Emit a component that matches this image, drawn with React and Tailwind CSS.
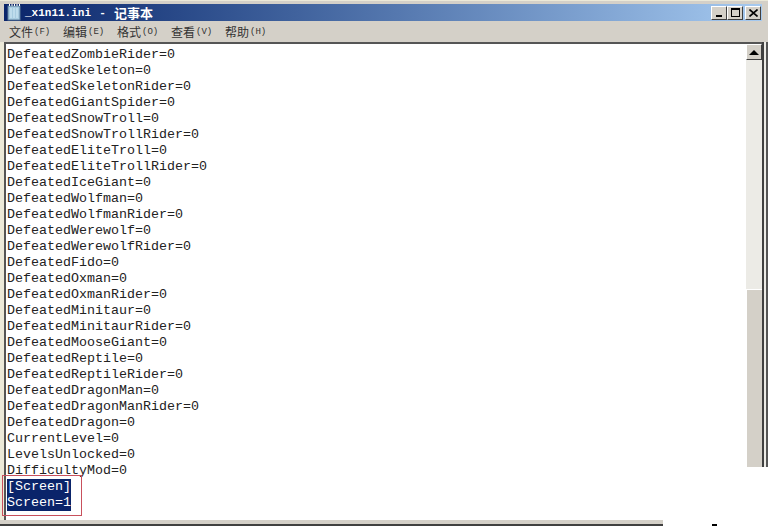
const lines = [
  'DefeatedZombieRider=0',
  'DefeatedSkeleton=0',
  'DefeatedSkeletonRider=0',
  'DefeatedGiantSpider=0',
  'DefeatedSnowTroll=0',
  'DefeatedSnowTrollRider=0',
  'DefeatedEliteTroll=0',
  'DefeatedEliteTrollRider=0',
  'DefeatedIceGiant=0',
  'DefeatedWolfman=0',
  'DefeatedWolfmanRider=0',
  'DefeatedWerewolf=0',
  'DefeatedWerewolfRider=0',
  'DefeatedFido=0',
  'DefeatedOxman=0',
  'DefeatedOxmanRider=0',
  'DefeatedMinitaur=0',
  'DefeatedMinitaurRider=0',
  'DefeatedMooseGiant=0',
  'DefeatedReptile=0',
  'DefeatedReptileRider=0',
  'DefeatedDragonMan=0',
  'DefeatedDragonManRider=0',
  'DefeatedDragon=0',
  'CurrentLevel=0',
  'LevelsUnlocked=0',
  'DifficultyMod=0',
]

const menus = [
  ['文件', '(F)'],
  ['编辑', '(E)'],
  ['格式', '(O)'],
  ['查看', '(V)'],
  ['帮助', '(H)'],
]

function WinButton({ children }) {
  return (
    <div className="w-[16px] h-[14px] bg-[#d4d0c8] border border-t-white border-l-white border-r-[#404040] border-b-[#404040] flex items-center justify-center">
      {children}
    </div>
  )
}

export default function App() {
  return (
    <div className="relative w-[768px] h-[526px] bg-white overflow-hidden font-['Liberation_Mono','Noto_Sans_CJK_SC',monospace]">
      <div className="bg-[#d4d0c8] pt-[3px] pl-[4px] pr-[6px] border-t border-[#ece9d8]">
        <div className="h-[17px] bg-gradient-to-r from-[#0a246a] to-[#a6caf0] flex items-center justify-between pl-[3px] pr-[1px]">
          <div className="flex items-center">
            <svg width="16" height="17" viewBox="0 0 16 17">
              <rect x="1" y="2" width="12" height="14" fill="#a8cce0" stroke="#5a7a98" />
              <path d="M2.5 2v-2M5 2v-2M7.5 2v-2M10 2v-2M12.5 2v-2" stroke="#fff" />
              <path d="M4 4v10M7 4v10M10 4v10" stroke="#d4ecf8" />
            </svg>
            <span className="ml-[2px] text-white text-[11px] font-bold leading-[16px] whitespace-pre">_x1n11.ini</span>
            <span className="w-[23px] text-center text-white text-[11px] font-bold leading-[16px]">-</span>
            <span className="text-white text-[13px] font-bold leading-[16px] font-['Noto_Sans_CJK_SC',sans-serif]">记事本</span>
          </div>
          <div className="flex items-center">
            <WinButton>
              <div className="w-[6px] h-[2px] bg-black mt-[6px]" />
            </WinButton>
            <WinButton>
              <div className="w-[9px] h-[9px] border border-black border-t-2" />
            </WinButton>
            <div className="ml-[2px]">
              <WinButton>
                <svg width="9" height="8" viewBox="0 0 9 8">
                  <path d="M0.5 0.5L8.5 7.5M8.5 0.5L0.5 7.5" stroke="#000" strokeWidth="1.6" />
                </svg>
              </WinButton>
            </div>
          </div>
        </div>
        <div className="h-[21px] flex items-center pl-[5px] text-[#333]">
          {menus.map(([label, key]) => (
            <span key={label} className="w-[54px] flex items-center whitespace-nowrap">
              <span className="text-[12px] font-['Noto_Sans_CJK_SC',sans-serif]">{label}</span>
              <span className="ml-[1px] mt-[2px] text-[9px] font-['Liberation_Mono',monospace]">{key}</span>
            </span>
          ))}
        </div>
      </div>

      <div className="flex h-[478px] bg-white">
        <div className="w-[4px] h-[478px] bg-[#ece9d8]" />
        <div className="flex-1 border-t-2 border-l-2 border-[#555] pt-[3px] pl-[1px] text-[13.33px] leading-[16px] text-[#222] font-['Liberation_Mono',monospace]">
          {lines.map((l) => (
            <div key={l}>{l}</div>
          ))}
          <div>
            <span className="inline-block bg-[#0a246a] text-white">[Screen]</span>
          </div>
          <div>
            <span className="inline-block bg-[#0a246a] text-white">Screen=1</span>
          </div>
        </div>
        <div className="w-[16px] h-[425px] flex flex-col bg-[#ecebe6] border-t-2 border-[#555]">
          <div className="h-[16px] bg-[#d4d0c8] border border-t-white border-l-white border-r-[#404040] border-b-[#404040] flex items-center justify-center">
            <div className="w-0 h-0 border-x-[5px] border-x-transparent border-b-[5px] border-b-black" />
          </div>
          <div className="h-[229px]" />
          <div className="flex-1 bg-[#d4d0c8] border-l border-t border-l-white border-t-white" />
        </div>
        <div className="w-[6px] h-[425px] border-l-2 border-r-2 border-l-[#404040] border-r-[#555] bg-[#ecebe6]" />
      </div>

      <div className="w-[663px] h-[4px] bg-[#d4d0c8]" />
      <div className="w-[663px] h-[2px] bg-[#404040]" />

      <div className="absolute left-[2px] top-[475px] w-[80px] h-[41px] border border-[#c8505c]" />
      <div className="absolute left-[712px] top-[524px] w-[5px] h-[2px] bg-black" />
    </div>
  )
}
